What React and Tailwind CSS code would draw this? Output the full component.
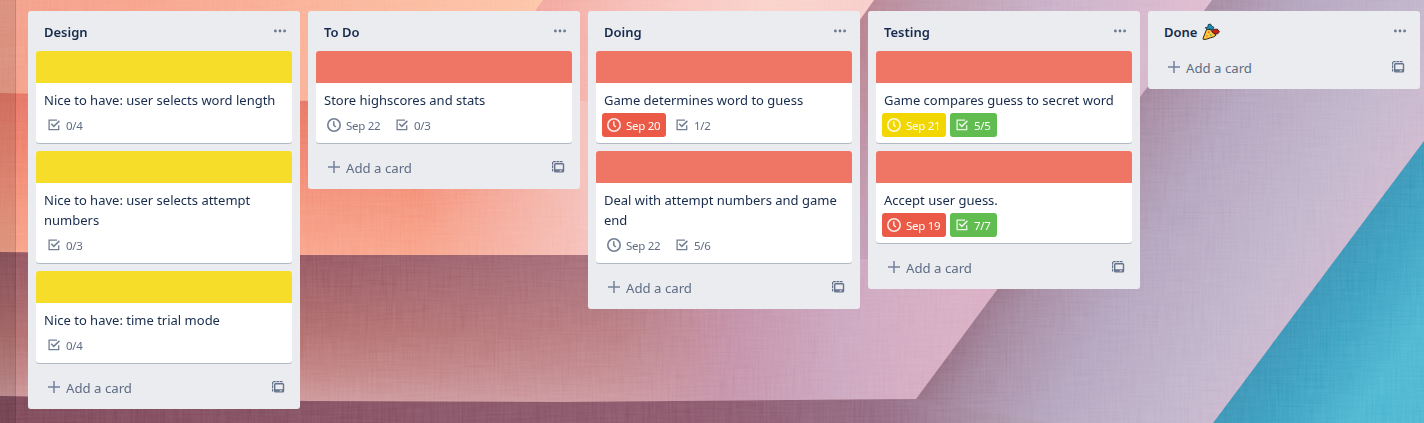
const FONT = "font-['Noto_Sans','Open_Sans',sans-serif]";

const LISTS = [
  {
    title: 'Design',
    cards: [
      { cover: 'yellow', title: 'Nice to have: user selects word length', checks: '0/4' },
      { cover: 'yellow', title: 'Nice to have: user selects attempt numbers', checks: '0/3' },
      { cover: 'yellow', title: 'Nice to have: time trial mode', checks: '0/4' },
    ],
  },
  { title: 'To Do', cards: [{ cover: 'red', title: 'Store highscores and stats', due: 'Sep 22', checks: '0/3' }] },
  {
    title: 'Doing',
    cards: [
      { cover: 'red', title: 'Game determines word to guess', due: 'Sep 20', dueTone: 'red', checks: '1/2' },
      { cover: 'red', title: 'Deal with attempt numbers and game end', due: 'Sep 22', checks: '5/6' },
    ],
  },
  {
    title: 'Testing',
    cards: [
      { cover: 'red', title: 'Game compares guess to secret word', due: 'Sep 21', dueTone: 'yellow', checks: '5/5', done: true },
      { cover: 'red', title: 'Accept user guess.', due: 'Sep 19', dueTone: 'red', checks: '7/7', done: true },
    ],
  },
  { title: 'Done', party: true, cards: [] },
];

const COVERS = { yellow: 'bg-[#f6dd29]', red: 'bg-[#ef7564]' };
const TONES = {
  plain: 'text-[#5e6c84]',
  red: 'bg-[#eb5a46] text-white',
  yellow: 'bg-[#f2d600] text-white',
  green: 'bg-[#61bd4f] text-white',
};

function ClockIcon() {
  return (
    <svg className="size-4 shrink-0" viewBox="0 0 16 16" fill="none" stroke="currentColor" strokeOpacity="0.88">
      <circle cx="8" cy="8" r="6.2" strokeWidth="1.6" />
      <path d="M7.8 4.2V8.2L9.8 10" strokeWidth="1.5" />
    </svg>
  );
}

function CheckIcon() {
  return (
    <svg className="size-4 shrink-0" viewBox="0 0 16 16" fill="none" stroke="currentColor" strokeOpacity="0.88">
      <path d="M11 3.1H3.1v9.6h9.6V8.3" strokeWidth="1.3" />
      <path d="M5.2 6.8l2.6 2.6L13.4 3.9" strokeWidth="1.5" />
    </svg>
  );
}

function PlusIcon() {
  return (
    <svg className="size-4 shrink-0" viewBox="0 0 16 16" fill="none" stroke="#75819a" strokeWidth="1.5">
      <path d="M8 2v12M2 8h12" />
    </svg>
  );
}

function TemplateIcon() {
  return (
    <svg className="size-4 shrink-0" viewBox="0 0 16 16" fill="none" stroke="#66738a">
      <path d="M2.6 12.5V2.7h10" strokeWidth="1.2" strokeDasharray="2.8 0.6" />
      <rect x="4.7" y="4.7" width="8.8" height="8.2" rx="0.8" strokeWidth="1.4" />
      <path d="M4.7 11.4h8.8" strokeWidth="2.2" />
      <path d="M9.8 11.8h1.8" stroke="#ebecf0" strokeWidth="1" />
    </svg>
  );
}

function DotsIcon() {
  return (
    <svg className="size-4 shrink-0" viewBox="0 0 16 16" fill="#6b778c">
      <circle cx="3.4" cy="8" r="1.4" />
      <circle cx="8" cy="8" r="1.4" />
      <circle cx="12.6" cy="8" r="1.4" />
    </svg>
  );
}

function PartyIcon() {
  return (
    <svg className="h-[18px] w-[18px] shrink-0" viewBox="0 0 18 18" strokeLinejoin="round">
      <path d="M1 15.4L4.6 6.4Q8 5 11.6 9.6L14 12.2Q12.4 14.2 8.4 14.8Q4 16.8 1.3 16.4Z" fill="#ffc83d" stroke="#2b211c" strokeWidth="1" />
      <path d="M3.2 4.8L6 4 6.2 1.6 8.6 1 9.4 3 11.8 4.2 10.6 6.8 8.1 6 5.6 6.6Z" fill="#1f91b3" stroke="#183747" strokeWidth="0.9" />
      <path d="M10 8.8L11.4 6.4 15.4 6.2 17.4 8.8 15.4 11 11.8 10.6Z" fill="#d51d16" stroke="#3c1414" strokeWidth="0.9" />
      <circle cx="6.8" cy="9.3" r="1" fill="#ed6a2d" />
      <circle cx="8.8" cy="12" r="0.9" fill="#57b36b" />
      <circle cx="5" cy="13" r="0.8" fill="#ed6a2d" />
    </svg>
  );
}

function Badge({ tone = 'plain', width, icon, children }) {
  return (
    <div className={`flex h-6 items-center gap-1 rounded-[3px] pl-1 text-[11.5px] leading-[18px] tracking-[-0.025em] ${width} ${TONES[tone]}`}>
      {icon}
      <span className="pt-px whitespace-nowrap">{children}</span>
    </div>
  );
}

function Card({ card }) {
  return (
    <article className="mb-2 overflow-hidden rounded-[3px] bg-white shadow-[0_1px_0_rgba(9,30,66,0.25)]">
      <div className={`h-8 ${COVERS[card.cover]}`} />
      <div className="px-2 pt-[7px] pb-[6px]">
        <h3 className="mb-[3px] text-[13px] leading-5 text-[#172b4d]">{card.title}</h3>
        <div className="-ml-0.5 flex gap-1">
          {card.due && <Badge tone={card.dueTone} width="w-16" icon={<ClockIcon />}>{card.due}</Badge>}
          <Badge tone={card.done ? 'green' : 'plain'} width="w-[47px]" icon={<CheckIcon />}>{card.checks}</Badge>
        </div>
      </div>
    </article>
  );
}

function List({ list }) {
  return (
    <section className="w-[272px] shrink-0 rounded-[3px] bg-[#ebecf0] px-2">
      <header className="flex h-10 items-center justify-between pl-2 pr-1">
        <h2 className="flex items-center gap-[5px] pt-0.5 text-[13px] leading-5 font-semibold text-[#172b4d]">
          {list.title}
          {list.party && <PartyIcon />}
        </h2>
        <DotsIcon />
      </header>
      {list.cards.map((card) => <Card key={card.title} card={card} />)}
      <footer className="flex h-[38px] items-start justify-between pl-[10px] pr-[6px] pt-2 text-[13.2px] leading-[18px] text-[#5e6c84]">
        <span className="flex items-start gap-1"><PlusIcon />Add a card</span>
        <TemplateIcon />
      </footer>
    </section>
  );
}

function PaperBackdrop() {
  return (
    <svg className="absolute inset-0 size-full" viewBox="0 0 1424 423" preserveAspectRatio="none">
      <defs>
        <linearGradient id="peach" gradientUnits="userSpaceOnUse" x1="0" y1="0" x2="545" y2="0"><stop stopColor="#f29c86" /><stop offset="0.25" stopColor="#f89f86" /><stop offset="0.6" stopColor="#fab096" /><stop offset="1" stopColor="#fdc3a5" /></linearGradient>
        <linearGradient id="coral" x1="0" y1="0" x2="0" y2="1"><stop stopColor="#e56f5e" /><stop offset="0.5" stopColor="#f28870" /><stop offset="1" stopColor="#f9a187" /></linearGradient>
        <linearGradient id="coralFade" gradientUnits="userSpaceOnUse" x1="420" y1="0" x2="590" y2="0"><stop stopColor="#f4beb8" stopOpacity="0" /><stop offset="1" stopColor="#f4beb8" /></linearGradient>
        <linearGradient id="blush" gradientUnits="userSpaceOnUse" x1="530" y1="0" x2="860" y2="0"><stop stopColor="#f2a097" /><stop offset="0.3" stopColor="#f6bbb3" /><stop offset="0.7" stopColor="#fad0c9" /><stop offset="1" stopColor="#f8cbc7" /></linearGradient>
        <linearGradient id="plum" x1="0" y1="0" x2="0" y2="1"><stop stopColor="#8f505b" /><stop offset="0.5" stopColor="#ae6868" /><stop offset="0.75" stopColor="#bf7e7e" /><stop offset="1" stopColor="#d09b9f" /></linearGradient>
        <linearGradient id="plumFade" gradientUnits="userSpaceOnUse" x1="300" y1="0" x2="760" y2="0"><stop stopColor="#b98a9b" stopOpacity="0" /><stop offset="1" stopColor="#c99aa6" stopOpacity="0.55" /></linearGradient>
        <linearGradient id="rose" gradientUnits="userSpaceOnUse" x1="620" y1="300" x2="960" y2="330"><stop stopColor="#c08aa0" stopOpacity="0" /><stop offset="0.35" stopColor="#c28faa" stopOpacity="0.85" /><stop offset="0.65" stopColor="#c9a3bd" /><stop offset="1" stopColor="#d7abc1" /></linearGradient>
        <linearGradient id="mauve" gradientUnits="userSpaceOnUse" x1="850" y1="0" x2="1200" y2="60"><stop stopColor="#b57886" /><stop offset="0.2" stopColor="#b892a4" /><stop offset="0.55" stopColor="#c6adc6" /><stop offset="1" stopColor="#deb8ce" /></linearGradient>
        <linearGradient id="mauveFade" gradientUnits="userSpaceOnUse" x1="0" y1="60" x2="0" y2="260"><stop stopColor="#c39cb9" stopOpacity="0" /><stop offset="1" stopColor="#c39cb9" stopOpacity="0.85" /></linearGradient>
        <linearGradient id="base"><stop stopColor="#7b4555" /><stop offset="0.65" stopColor="#885468" /><stop offset="0.8" stopColor="#906680" /><stop offset="0.92" stopColor="#a995aa" /><stop offset="1" stopColor="#b9abc0" /></linearGradient>
        <linearGradient id="lilac" gradientUnits="userSpaceOnUse" x1="1010" y1="240" x2="1270" y2="400"><stop stopColor="#91697f" /><stop offset="0.15" stopColor="#a1869e" /><stop offset="0.4" stopColor="#b1a1bb" /><stop offset="0.75" stopColor="#bfb2c9" /><stop offset="1" stopColor="#cdb7ce" /></linearGradient>
        <linearGradient id="teal" gradientUnits="userSpaceOnUse" x1="1310" y1="270" x2="1410" y2="340"><stop stopColor="#358eb1" /><stop offset="0.5" stopColor="#389fbf" /><stop offset="1" stopColor="#48b4cf" /></linearGradient>
        <filter id="warp" x="0" y="0" width="100%" height="100%">
          <feTurbulence type="fractalNoise" baseFrequency="0.5 0.03" numOctaves="2" seed="4" />
          <feColorMatrix values="0.6 0.6 0 0 -0.1 0.6 0.6 0 0 -0.1 0.6 0.6 0 0 -0.1 0 0 0 0 1" />
        </filter>
        <filter id="weft" x="0" y="0" width="100%" height="100%">
          <feTurbulence type="fractalNoise" baseFrequency="0.03 0.5" numOctaves="2" seed="9" />
          <feColorMatrix values="0.6 0.6 0 0 -0.1 0.6 0.6 0 0 -0.1 0.6 0.6 0 0 -0.1 0 0 0 0 1" />
        </filter>
      </defs>
      <path d="M0 0H560V110H0Z" fill="url(#peach)" />
      <path d="M0 93L310 101H620V256H0Z" fill="url(#coral)" />
      <path d="M543 0H900V256H580V102H470Z" fill="url(#blush)" />
      <path d="M400 101H590V256H400Z" fill="url(#coralFade)" />
      <path d="M0 252L310 255H920V410H0Z" fill="url(#plum)" />
      <path d="M300 255H920V410H300Z" fill="url(#plumFade)" />
      <path d="M560 255H1100L916 399 560 402Z" fill="url(#rose)" />
      <path d="M874 0H1220L1020 259H690Z" fill="url(#mauve)" />
      <path d="M874 0H1220L1020 259H690Z" fill="url(#mauveFade)" />
      <path d="M0 396L310 401 560 402 916 399 1100 330V423H0Z" fill="url(#base)" />
      <path d="M1212 0H1424V423H1050L916 399Z" fill="url(#lilac)" />
      <path d="M1424 141V423H1213Z" fill="url(#teal)" />
      <g className="mix-blend-soft-light">
        <path d="M0 0H1424V423H0Z" filter="url(#warp)" opacity="0.22" />
      </g>
      <g className="mix-blend-soft-light">
        <path d="M0 0H1424V423H0Z" filter="url(#weft)" opacity="0.18" />
      </g>
      <path d="M0 0H15.5V423H0Z" fill="#000" fillOpacity="0.1" />
      <path d="M15.5 0V423" stroke="#000" strokeOpacity="0.15" />
    </svg>
  );
}

export default function App() {
  return (
    <main className={`relative h-[423px] w-full overflow-hidden ${FONT}`}>
      <PaperBackdrop />
      <div className="relative flex items-start gap-2 pl-7 pt-[11px]">
        {LISTS.map((list) => <List key={list.title} list={list} />)}
      </div>
    </main>
  );
}
